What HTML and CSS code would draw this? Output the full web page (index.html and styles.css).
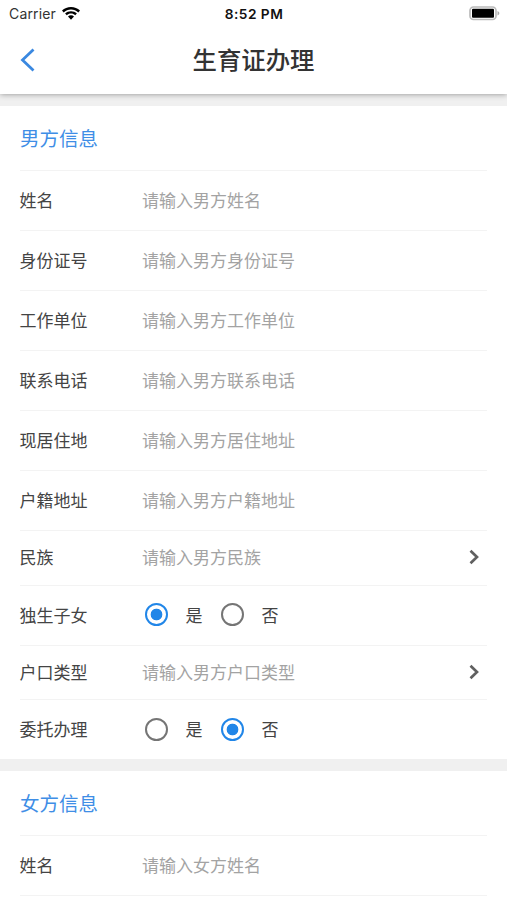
FILE: index.html
```html
<!DOCTYPE html>
<html lang="zh-CN">
<head>
<meta charset="utf-8">
<title>生育证办理</title>
<link rel="stylesheet" href="styles.css">
</head>
<body>
<header class="header">
  <div class="status">
    <div class="carrier">Carrier
      <svg class="wifi" viewBox="0 0 18 13"><path d="M9 0C5.500 0 2.400 1.300 0 3.600l1.700 1.800C3.700 3.500 6.200 2.500 9 2.500s5.300 1 7.300 2.900L18 3.600C15.600 1.300 12.500 0 9 0zM9 4.200c-2.300 0-4.300.9-5.900 2.300l1.700 1.800C6 7.200 7.400 6.600 9 6.600s3 .6 4.200 1.700l1.700-1.800C13.300 5.100 11.300 4.200 9 4.200zM9 8.300c-1.200 0-2.200.4-3 1.200L9 12.700l3-3.200c-.8-.8-1.800-1.200-3-1.200z"/></svg>
    </div>
    <div class="time">8:52 PM</div>
    <svg class="battery" viewBox="0 0 31 15"><rect x="1" y="1" width="26" height="12.500" rx="3.500" fill="none" stroke="#bbb" stroke-width="1.700"/><rect x="3" y="2.800" width="22" height="9" rx="1"/><path d="M28.500 5v4.500c2.400-.8 2.400-3.700 0-4.500z" fill="#aaa"/></svg>
  </div>
  <div class="nav">
    <svg class="back" viewBox="0 0 16 24"><path d="M13.500 1.500L2.500 12l11 10.500"/></svg>
    <h1>生育证办理</h1>
  </div>
</header>
<main>
  <section class="card">
    <h2>男方信息</h2>
    <div class="row"><label>姓名</label><span class="hint">请输入男方姓名</span></div>
    <div class="row"><label>身份证号</label><span class="hint">请输入男方身份证号</span></div>
    <div class="row"><label>工作单位</label><span class="hint">请输入男方工作单位</span></div>
    <div class="row"><label>联系电话</label><span class="hint">请输入男方联系电话</span></div>
    <div class="row"><label>现居住地</label><span class="hint">请输入男方居住地址</span></div>
    <div class="row"><label>户籍地址</label><span class="hint">请输入男方户籍地址</span></div>
    <div class="row pick"><label>民族</label><span class="hint">请输入男方民族</span><svg class="arrow" viewBox="0 0 10 16"><path d="M1.500 1.700L8 8l-6.500 6.300"/></svg></div>
    <div class="row"><label>独生子女</label><i class="radio on"></i><span class="opt">是</span><i class="radio"></i><span class="opt">否</span></div>
    <div class="row pick"><label>户口类型</label><span class="hint">请输入男方户口类型</span><svg class="arrow" viewBox="0 0 10 16"><path d="M1.500 1.700L8 8l-6.500 6.300"/></svg></div>
    <div class="row end"><label>委托办理</label><i class="radio"></i><span class="opt">是</span><i class="radio on"></i><span class="opt">否</span></div>
  </section>
  <section class="card rest">
    <h2>女方信息</h2>
    <div class="row"><label>姓名</label><span class="hint">请输入女方姓名</span></div>
  </section>
</main>
</body>
</html>
```
FILE: styles.css
```css
* { box-sizing: border-box; }
html, body { height: 900px; overflow: hidden; }
body { margin: 0; background: #f0f0f0; color: #444; font-family: "Noto Sans CJK SC", sans-serif; font-size: 17px; }
.header { position: relative; height: 94px; background: #fff; box-shadow: 0 0 6px rgba(0,0,0,.42); }
.status { display: grid; grid-template-columns: 1fr auto 1fr; align-items: center; height: 27px; padding: 0 7px 0 9px; color: #111; font-family: Inter, sans-serif; font-size: 14px; }
.carrier { display: flex; align-items: center; gap: 6px; color: #333; letter-spacing: .15px; }
.wifi { width: 18px; height: 13px; margin-top: -1px; fill: #000; }
.time { margin-left: -1px; font-size: 13.700px; font-weight: 600; letter-spacing: .5px; }
.battery { width: 31px; height: 15px; justify-self: end; }
.nav { display: grid; grid-template-columns: 50px 1fr 50px; align-items: center; height: 66px; }
.back { width: 16px; height: 24px; margin-left: 20px; fill: none; stroke: #3a88e0; stroke-width: 2.8; }
h1 { margin: -2px 0 0; color: #333; text-align: center; font-size: 24.400px; font-weight: 500; line-height: 36px; }
.card { margin-top: 12px; padding: 0 20px; background: #fff; }
h2 { height: 65px; margin: 0; color: #3f8ee6; font-size: 19.500px; font-weight: 400; line-height: 63px; border-bottom: 1px solid #f3f3f3; }
.row { display: flex; align-items: center; height: 60px; padding-bottom: 1px; border-bottom: 1px solid #f3f3f3; }
.pick { height: 54.500px; }
.end { height: 59px; border-bottom: 0; }
.rest { height: 129px; }
label { width: 122.500px; margin-left: -.5px; line-height: 24px; }
.hint, .opt { line-height: 24px; }
.hint { color: #a3a3a3; }
.arrow { width: 10px; height: 16px; margin: 0 8px 0 auto; fill: none; stroke: #606060; stroke-width: 2.7; }
.radio { width: 23px; height: 23px; margin-left: 3px; border: 2.500px solid #757575; border-radius: 50%; }
.opt { width: 50px; padding-left: 17.500px; }
.on { border-color: #2186e8; background: radial-gradient(circle, #2186e8 5.500px, transparent 6.200px); }
```
